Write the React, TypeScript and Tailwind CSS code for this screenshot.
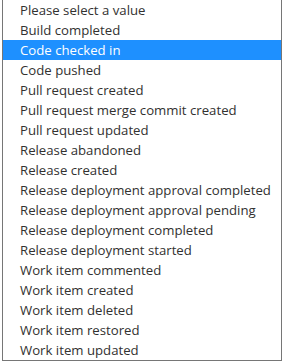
const items = [
  'Please select a value',
  'Build completed',
  'Code checked in',
  'Code pushed',
  'Pull request created',
  'Pull request merge commit created',
  'Pull request updated',
  'Release abandoned',
  'Release created',
  'Release deployment approval completed',
  'Release deployment approval pending',
  'Release deployment completed',
  'Release deployment started',
  'Work item commented',
  'Work item created',
  'Work item deleted',
  'Work item restored',
  'Work item updated',
];

export default function App() {
  return (
    <div className="w-[283px] h-[362px] bg-white pl-[2px] pr-[1px]">
      <ul className="border-x border-b border-[#767676] bg-white font-['Open_Sans',sans-serif] text-[13.2px] text-[#323130]">
        {items.map((item, i) => (
          <li
            key={item}
            className={`h-5 leading-5 pl-[17px] whitespace-nowrap ${i === 2 ? 'bg-[#1e90ff] text-white' : ''}`}
          >
            {item}
          </li>
        ))}
      </ul>
    </div>
  );
}
